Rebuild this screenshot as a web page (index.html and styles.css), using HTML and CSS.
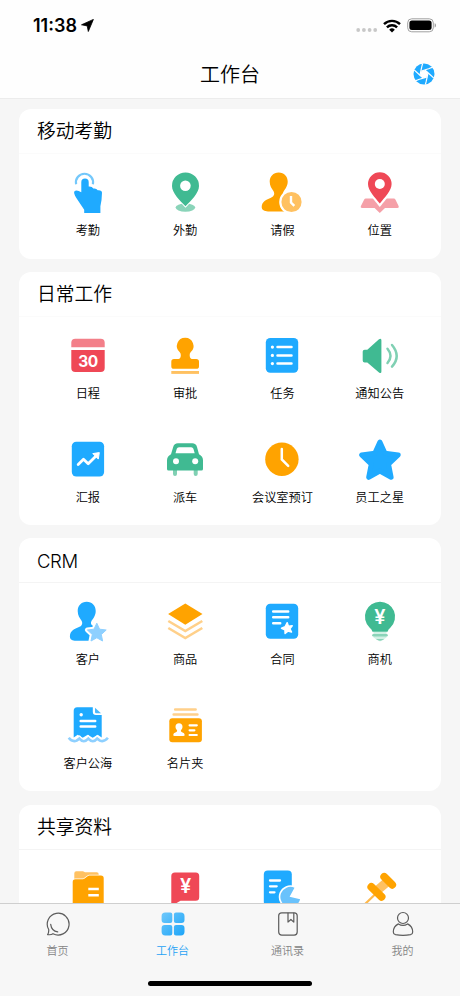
FILE: index.html
```
<!DOCTYPE html>
<html lang="zh-CN">
<head>
    <meta charset="UTF-8">
    <meta name="viewport" content="width=device-width, initial-scale=1.0">
    <title>工作台</title>
    <link rel="stylesheet" href="styles.css">
</head>
<body>
<div class="app">

    <header class="top">
        <div class="status-bar">
            <span class="time">11:38</span>
            <svg class="location" width="13" height="13" viewBox="0 0 13 13"><path d="M12.4.4 7.3 12.5 6.2 6.9.5 5.8z" fill="#000" stroke="#000" stroke-width=".8" stroke-linejoin="round"/></svg>
            <svg class="signal" width="22" height="4" viewBox="0 0 22 4" fill="#c8c8c8"><circle cx="2.2" cy="2" r="1.9"/><circle cx="7.9" cy="2" r="1.9"/><circle cx="13.6" cy="2" r="1.9"/><circle cx="19.2" cy="2" r="1.9"/></svg>
            <svg class="wifi" width="18" height="14" viewBox="0 0 18 14" fill="none" stroke="#000" stroke-width="2.4">
                <path d="M1 5.2a11.4 11.4 0 0 1 16 0"/>
                <path d="M3.9 8.3a7.3 7.3 0 0 1 10.2 0"/>
                <path d="M9 13.4 6.2 10.7a4 4 0 0 1 5.6 0z" fill="#000" stroke="none"/>
            </svg>
            <svg class="battery" width="30" height="15" viewBox="0 0 30 15"><rect x=".7" y=".8" width="25.6" height="13" rx="4" fill="none" stroke="#a0a0a0"/><rect x="2.4" y="2.5" width="22.2" height="9.6" rx="2.5"/><path d="M27.6 5.2c1.9.6 1.9 3.7 0 4.3z" fill="#a0a0a0"/></svg>
        </div>
        <div class="title-bar">
            <h1>工作台</h1>
            <svg class="scan" width="22" height="22" viewBox="0 0 22 22">
                <circle cx="11" cy="11" r="10.5" fill="#1faaff"/>
                <path d="M11 6.9 14.7 9v4.1L11 15.2l-3.7-2.1V9z" fill="#fff"/>
                <g stroke="#fff" stroke-width="1.2" transform="rotate(12 11 11)">
                    <path d="M7.3 9 15 4.5 18 2.5"/><path d="M11 6.9 18.5 11.2 21.5 13"/><path d="M14.7 9v8.5L14.5 21"/>
                    <path d="M14.7 13.1 7 17.5 4 19.5"/><path d="M11 15.2 3.5 10.8.5 9"/><path d="M7.3 13.1V4.500L7.500 1"/>
                </g>
            </svg>
        </div>
    </header>

    <main class="content">
        <section class="card faint">
            <h2>移动考勤</h2>
            <div class="grid">
                <div class="item">
                    <svg class="icon" viewBox="0 0 48 48">
                        <path d="M12.1 16.2a8.6 8.6 0 1 1 16.8 0" fill="none" stroke="#74c8fb" stroke-width="2.2"/>
                        <path d="M17.3 14.2a3.7 3.7 0 0 1 7.4 0v4.4q3.6-.2 4.6 2 3-.6 4.4 1.6 4.3-.4 4.3 2.6-.1 7-1.600 13.400V45H20.200v-3.300L12 29.400Q9.500 25 10.300 23.400q2.200-2 7 .8z" fill="#1faaff"/>
                    </svg>
                    <span>考勤</span>
                </div>
                <div class="item">
                    <svg class="icon" viewBox="0 0 48 48">
                        <ellipse cx="24.4" cy="39.6" rx="9.8" ry="4.1" fill="#8ad4b9"/>
                        <path d="M24.5 38.2C19 32.4 11 25 11 17.9a13.5 13.5 0 0 1 27 0c0 7.100-8 14.500-13.500 20.300z" fill="#40ba92" stroke="#fff" stroke-width="2" paint-order="stroke"/>
                        <circle cx="24.400" cy="17.800" r="5.300" fill="#fff"/>
                    </svg>
                    <span>外勤</span>
                </div>
                <div class="item">
                    <svg class="icon" viewBox="0 0 48 48">
                        <path d="M20.700 4.400c5.500 0 9 4 9 9.200 0 4.600-2.200 7-4 9.600-1.500 2.500-.8 4.800 2 5.800l3 14.400H10c-3.500 0-6.300-1.300-6.300-4.300 0-5.500 4.800-7.400 9.300-9.300 3.300-1.400 4-4.200 2.400-6.700-1.700-2.500-3.700-5-3.700-9.500 0-5.200 3.600-9.200 9-9.200z" fill="#ffa300"/>
                        <circle cx="33.5" cy="34" r="11.200" fill="#ffc161" stroke="#fff" stroke-width="2.200"/>
                        <path d="M33 28v6.600l3.300 3.300" fill="none" stroke="#fff" stroke-width="2.400"/>
                    </svg>
                    <span>请假</span>
                </div>
                <div class="item">
                    <svg class="icon" viewBox="0 0 48 48">
                        <path d="M9.700 30.500h28.200q1 0 1.500 1l3.300 6.700q.6 1.800-1.200 1.800H29l-5.200 5-5.200-5H6q-1.800 0-1.200-1.800L8.200 31.500q.5-1 1.500-1z" fill="#f5a0a8"/>
                        <path d="M23.800 35.500C19 29.500 12 22.500 12 16a11.800 11.800 0 0 1 23.600 0c0 6.500-7 13.500-11.800 19.500z" fill="#ef4856" stroke="#fff" stroke-width="4.500" paint-order="stroke"/>
                        <circle cx="23.800" cy="16" r="5" fill="#fff"/>
                    </svg>
                    <span>位置</span>
                </div>
            </div>
        </section>

        <section class="card faint">
            <h2>日常工作</h2>
            <div class="grid">
                <div class="item">
                    <svg class="icon" viewBox="0 0 48 48">
                        <path d="M7.300 16.200v-4.400q0-4 4-4h25.400q4 0 4 4v4.400z" fill="#f37f89"/>
                        <path d="M7.300 18.900h33.400v18.200q0 4-4 4H11.300q-4 0-4-4z" fill="#ef4856"/>
                        <text class="day" x="24" y="35.600">30</text>
                    </svg>
                    <span>日程</span>
                </div>
                <div class="item">
                    <svg class="icon" viewBox="0 0 48 48">
                        <path d="M24.300 6.700a8.300 8.300 0 0 1 5.300 14.600q-1.200 1.200-.9 3.500.2 3 2.300 3.200h4.200q2.800 0 2.800 2.800v4.400q0 2.600-2.800 2.600H13q-2.700 0-2.700-2.600v-4.400q0-2.800 2.700-2.800h4.400q2.200-.2 2.400-3.200.2-2.300-1-3.500A8.300 8.300 0 0 1 24.300 6.700z" fill="#ffa300"/>
                        <path d="M10.300 40h27.700v2.900H10.300z" fill="#ffc161"/>
                    </svg>
                    <span>审批</span>
                </div>
                <div class="item">
                    <svg class="icon" viewBox="0 0 48 48">
                        <rect x="7.800" y="7" width="32.400" height="34.700" rx="4.500" fill="#1faaff"/>
                        <g stroke="#fff" stroke-width="2.500" stroke-linecap="round"><path d="M19.500 16.100h14M19.500 24.400h14M19.500 32.600h14"/></g>
                        <g fill="#fff"><circle cx="14.400" cy="16.100" r="1.600"/><circle cx="14.400" cy="24.400" r="1.600"/><circle cx="14.400" cy="32.600" r="1.600"/></g>
                    </svg>
                    <span>任务</span>
                </div>
                <div class="item">
                    <svg class="icon" viewBox="0 0 48 48">
                        <path d="M6.700 20.600q0-1.900 2-1.900h2.600L23 8.300q2.400-1.600 2.400 1v31.300q0 2.400-2.400 1L11.300 31.400H8.700q-2 0-2-1.900z" fill="#40ba92"/>
                        <g fill="none" stroke="#80d0b3" stroke-width="2.500" stroke-linecap="round"><path d="M31.500 17.800q6 7.200 0 14.200"/><path d="M36 14q9.400 11.200 0 21.600"/></g>
                    </svg>
                    <span>通知公告</span>
                </div>
                <div class="item">
                    <svg class="icon" viewBox="0 0 48 48">
                        <rect x="7.800" y="6.800" width="32.300" height="34.700" rx="4.500" fill="#1faaff"/>
                        <path d="m14.200 29.500 5.300-5.200 4.700 4.400 8.600-8.400" fill="none" stroke="#fff" stroke-width="2.800" stroke-linejoin="round" stroke-linecap="round"/>
                        <path d="m28.800 18.600 6.500-1-1 6.500z" fill="#fff" stroke="#fff" stroke-linejoin="round"/>
                    </svg>
                    <span>汇报</span>
                </div>
                <div class="item">
                    <svg class="icon" viewBox="0 0 48 48">
                        <path d="M14 34v5M34.700 34v5" stroke="#80d0b3" stroke-width="4" stroke-linecap="round"/>
                        <path d="M17 8.300h14.200q3.800 0 4.800 3.700l2 7.300q4 2 4 6V34q0 1.600-1.600 1.600H7.600Q6 35.600 6 34v-8.700q0-4 4-6l2.200-7.300q1-3.700 4.800-3.700z" fill="#40ba92"/>
                        <path d="M18 12.200h12.200q1.700 0 2.200 1.600l1.300 4.500H14.500l1.300-4.500q.5-1.600 2.200-1.600z" fill="#fff"/>
                        <circle cx="15" cy="26.200" r="3" fill="#fff"/><circle cx="34.200" cy="26.200" r="3" fill="#fff"/>
                    </svg>
                    <span>派车</span>
                </div>
                <div class="item">
                    <svg class="icon" viewBox="0 0 48 48">
                        <circle cx="23.900" cy="24.200" r="16.700" fill="#ffa300"/>
                        <path d="M23.800 14v10.500l6.400 6.400" fill="none" stroke="#fff" stroke-width="2.500" stroke-linecap="round"/>
                    </svg>
                    <span>会议室预订</span>
                </div>
                <div class="item">
                    <svg class="icon" viewBox="0 0 48 48">
                        <path d="m23.900 7 5.100 11.200 13.200 1.700-9.700 9.200 2.600 13.200-11.200-6.300-11.200 6.300 2.600-13.200-9.700-9.200 13.200-1.700z" fill="#1faaff" stroke="#1faaff" stroke-width="5" stroke-linejoin="round"/>
                    </svg>
                    <span>员工之星</span>
                </div>
            </div>
        </section>

        <section class="card">
            <h2 class="latin">CRM</h2>
            <div class="grid">
                <div class="item">
                    <svg class="icon" viewBox="0 0 48 48">
                        <path d="M22.700 4.700c5.500 0 9 4 9 9.200 0 4.600-2.200 7-4 9.600-1.500 2.500-.8 4.800 2 5.800L25 43.700H12c-3.500 0-6.100-1.300-6.100-4.300 0-5.500 4.600-7.400 9.100-9.300 3.300-1.400 4-4.200 2.400-6.700-1.700-2.500-3.700-5-3.700-9.500 0-5.200 3.600-9.200 9-9.200z" fill="#1faaff"/>
                        <path class="star-cut" d="m32.800 26.200 2.800 6 6.600.8-4.900 4.500 1.300 6.500-5.800-3.200-5.800 3.200 1.300-6.500-4.900-4.500 6.600-.8z"/>
                        <path d="m32.800 26.200 2.800 6 6.600.8-4.900 4.500 1.300 6.500-5.800-3.200-5.800 3.200 1.300-6.500-4.900-4.500 6.600-.8z" fill="#8ed0ff" stroke="#8ed0ff" stroke-linejoin="round"/>
                    </svg>
                    <span>客户</span>
                </div>
                <div class="item">
                    <svg class="icon" viewBox="0 0 48 48">
                        <g fill="none" stroke="#ffd08a" stroke-width="2.600"><path d="m7.300 24 17 10 17-10"/><path d="m7.300 31 17 10 17-10"/></g>
                        <path d="m24.300 6.500 17.200 10.600-17.200 10.700L7.100 17.100z" fill="#ffa300"/>
                    </svg>
                    <span>商品</span>
                </div>
                <div class="item">
                    <svg class="icon" viewBox="0 0 48 48">
                        <rect x="7.800" y="6.800" width="32.400" height="35" rx="4.500" fill="#1faaff"/>
                        <path d="M15.200 14.400h15M15.200 20.200h15M15.200 26.200h7" stroke="#fff" stroke-width="2.500" stroke-linecap="round"/>
                        <path d="m29.200 25.700 1.200 3.500 3.800-.5-2.300 3 1.600 3.400-3.600-1-2.800 2.300-.2-3.700-3.400-1.500 3.600-1.400z" fill="#fff" stroke="#fff" stroke-width="1.500" stroke-linejoin="round"/>
                    </svg>
                    <span>合同</span>
                </div>
                <div class="item">
                    <svg class="icon" viewBox="0 0 48 48">
                        <path d="M24 4.700a15 15 0 0 1 10.500 25.800q-2.400 1.800-3 4.300h-15q-.6-2.500-3-4.300A15 15 0 0 1 24 4.700z" fill="#40ba92"/>
                        <path d="M17.500 34.900h13v5.500L24 44.500l-6.500-4.100z" fill="#d2f0e5"/>
                        <path d="M17.500 38.300h13" stroke="#8ad4b9" stroke-width="2.600" stroke-linecap="round"/>
                        <path d="M19.800 42h8.600q-4.300 3.600-8.600 0z" fill="#8ad4b9"/>
                        <text class="yen" x="24" y="27.400">¥</text>
                    </svg>
                    <span>商机</span>
                </div>
                <div class="item">
                    <svg class="icon" viewBox="0 0 48 48">
                        <path d="M13.200 6.300h15.600v4.500q0 3.200 3.200 3.200h5.700v22.500l-4-2.700-5 2.900-5-2.900-5 2.900-5-2.900-4 2.700V9.800q0-3.500 3.500-3.500z" fill="#1faaff"/>
                        <path d="m31 6.700 6 5.500h-4.800q-1.200 0-1.200-1.200z" fill="#4ab9fc"/>
                        <circle cx="17.200" cy="13.800" r="1.700" fill="#fff"/>
                        <path d="M16.700 19.900h14.500M16.700 25.500h14.500" stroke="#fff" stroke-width="2.500" stroke-linecap="round"/>
                        <path d="M4.700 36.800q3.500 4.600 8 2.800l2.700-2q4.300 5.200 8.900 0 4.600 5.200 8.900 0l2.700 2q4.300 1.800 8-2.800" fill="none" stroke="#fff" stroke-width="5"/>
                        <path d="M4.700 36.800q3.500 4.600 8 2.800l2.700-2q4.300 5.200 8.900 0 4.600 5.200 8.900 0l2.700 2q4.300 1.800 8-2.800" fill="none" stroke="#8ed0ff" stroke-width="2.600"/>
                    </svg>
                    <span>客户公海</span>
                </div>
                <div class="item">
                    <svg class="icon" viewBox="0 0 48 48">
                        <path d="M14.200 8.500h20.400M12.700 13.500h23.700" stroke="#ffd08a" stroke-width="2.600" stroke-linecap="round"/>
                        <rect x="8.300" y="17.200" width="32.600" height="24.100" rx="3" fill="#ffa300"/>
                        <path d="M18 22.300c2.200 0 3.500 1.500 3.500 3.500 0 1.600-.7 2.700-1.600 3.500q-.3 1.500 1.200 2 2.600.7 2.600 2.800 0 1-1.500 1h-8.500q-1.500 0-1.500-1 0-2.100 2.700-2.800 1.500-.5 1.200-2c-.9-.8-1.600-1.900-1.600-3.500 0-2 1.300-3.500 3.500-3.500z" fill="#fff"/>
                        <path d="M28.600 24.300h7.200M28.600 29.300h4.800M28.600 34h7.200" stroke="#fff" stroke-width="2.200" stroke-linecap="round"/>
                    </svg>
                    <span>名片夹</span>
                </div>
            </div>
        </section>

        <section class="card">
            <h2>共享资料</h2>
            <div class="grid">
                <div class="item">
                    <svg class="icon" viewBox="0 0 48 48">
                        <path d="M10.300 9.200q0-2 2-2H19l2 1h11.700q2 0 2 2V18H10.300z" fill="#ffc161"/>
                        <path d="M8.700 18q0-2.700 2.600-2.700h7.500q1 0 1.800-.8l3-2.200q.8-.7 1.800-.7h11.500q2.800 0 2.800 2.800v26q0 2.500-2.500 2.500h-26q-2.500 0-2.500-2.500z" fill="#ffa300" stroke="#fff" stroke-width="1.600" paint-order="stroke"/>
                        <path d="M24.300 25h10.500M24.300 31.200h10.500" stroke="#fff" stroke-width="2.400"/>
                    </svg>
                </div>
                <div class="item">
                    <svg class="icon" viewBox="0 0 48 48">
                        <path d="M14 8.500h20.700q3.500 0 3.500 3.500v21.300q0 3.500-3.500 3.500H19.500L10.300 42V12q0-3.500 3.700-3.500z" fill="#ef4856"/>
                        <text class="yen" x="24.600" y="29.200">¥</text>
                    </svg>
                </div>
                <div class="item">
                    <svg class="icon" viewBox="0 0 48 48">
                        <rect x="5.800" y="6.500" width="28" height="35" rx="4" fill="#1faaff"/>
                        <path d="M12 16.500h10M12 22.300h6.700M12 28.300h4.500" stroke="#fff" stroke-width="2.300" stroke-linecap="round"/>
                        <path d="M36.500 23.800 31.600 32.700l10.500 2.500A10 10 0 1 1 36.500 23.800z" fill="#69c2fc" stroke="#fff" stroke-width="3.200" paint-order="stroke"/>
                    </svg>
                </div>
                <div class="item">
                    <svg class="icon" viewBox="0 0 48 48">
                        <path d="M20 29.500 7 42" stroke="#ffb94b" stroke-width="2.200"/>
                        <path d="m19.800 27.600 11.500-9.800" stroke="#ffc161" stroke-width="9"/>
                        <path d="m28.200 12.800 8 8M15.300 22.900l10.300 10" stroke="#ffa300" stroke-width="7.800" stroke-linecap="round"/>
                    </svg>
                </div>
            </div>
        </section>
    </main>

    <nav class="tabs">
        <div class="tab">
            <svg width="26" height="26" viewBox="0 0 26 26" fill="none" stroke="#5c5c5c" stroke-width="1.200" stroke-linecap="round" stroke-linejoin="round">
                <path d="M3.700 18.500A10.900 10.900 0 1 1 8 22.700q-2 1.400-5.400.9 1.400-1.900 1.100-5.100z"/>
                <path d="M5.700 13.400q.8 6.600 7 7.500"/>
            </svg>
            <span>首页</span>
        </div>
        <div class="tab active">
            <svg width="26" height="26" viewBox="0 0 26 26">
                <defs><linearGradient id="blue" x1="0" y1="0" x2="1" y2="1"><stop offset="0" stop-color="#6fc8fb"/><stop offset="1" stop-color="#1da5f8"/></linearGradient></defs>
                <path fill="url(#blue)" d="M5.200 1.600h5.100q2 0 2 2v6.300q0 2-2 2H4.600q-3 0-3-3V5.200q0-3.600 3.600-3.600zM15.900 1.600h5q3.600 0 3.600 3.600v3.700q0 3-3 3h-5.600q-2 0-2-2V3.600q0-2 2-2zM4.600 13.900h5.700q2 0 2 2v6.500q0 2-2 2H5.200q-3.600 0-3.600-3.600v-3.900q0-3 3-3zM15.900 13.900h5.600q3 0 3 3v3.900q0 3.600-3.600 3.600h-5q-2 0-2-2v-6.500q0-2 2-2z"/>
            </svg>
            <span>工作台</span>
        </div>
        <div class="tab">
            <svg width="26" height="26" viewBox="0 0 26 26" fill="none" stroke="#5c5c5c" stroke-width="1.200" stroke-linejoin="round">
                <rect x="3.700" y="1.800" width="18.500" height="22.300" rx="3"/>
                <path d="M13 1.800v9.300l2.900-2.600 2.900 2.600V1.800"/>
            </svg>
            <span>通讯录</span>
        </div>
        <div class="tab">
            <svg width="26" height="26" viewBox="0 0 26 26" fill="none" stroke="#5c5c5c" stroke-width="1.200" stroke-linejoin="round">
                <circle cx="13" cy="7" r="5.500"/>
                <path d="M8.400 12.900Q3.300 15.500 3.300 21q0 2.200 2.200 2.700 7.500 1.200 15 0 2.200-.5 2.200-2.700 0-5.500-5.100-8.100-4.600 2.900-9.200 0z"/>
            </svg>
            <span>我的</span>
        </div>
    </nav>
    <div class="home-area"><div class="home-indicator"></div></div>

</div>
</body>
</html>
```
FILE: styles.css
```
* {
    box-sizing: border-box;
}

body {
    margin: 0;
    background: #f6f6f6;
    color: #000;
    font-family: "Noto Sans CJK SC", sans-serif;
    font-weight: 350;
}

.app {
    display: flex;
    flex-direction: column;
    width: 460px;
    height: 996px;
    overflow: hidden;
}

/* Status bar + title */
.top {
    height: 99px;
    background: #fefefe;
    border-bottom: 1px solid #ececec;
}

.status-bar {
    display: flex;
    align-items: center;
    height: 51px;
    padding: 0 23px 0 33px;
}

.time {
    font-family: Inter, sans-serif;
    font-size: 18px;
    font-weight: 600;
    line-height: 20px;
}

.location {
    margin-left: 4px;
}

.signal {
    margin: 9px 5px 0 auto;
}

.wifi {
    margin-right: 6px;
}

.title-bar {
    display: grid;
    grid-template-columns: 1fr auto 1fr;
    align-items: center;
    height: 45px;
    padding: 0 25px;
}

.title-bar h1 {
    grid-column: 2;
    margin: 0;
    font-size: 20px;
    font-weight: 350;
    line-height: 28px;
}

.scan {
    justify-self: end;
}

/* Cards */
.content {
    flex: 1;
    min-height: 0;
    overflow: hidden;
    padding: 10.25px 19px 0 18.5px;
}

.card {
    margin-bottom: 13.25px;
    background: #fff;
    border-radius: 12px;
}

.card h2 {
    height: 45px;
    margin: 0 0 1px;
    padding-left: 18.5px;
    border-bottom: 1px solid #f4f4f4;
    font-family: Inter, "Noto Sans CJK SC", sans-serif;
    font-size: 18.8px;
    font-weight: 350;
    line-height: 46px;
}

.card.faint h2 {
    border-bottom-color: #fbfbfb;
}

.card h2.latin {
    font-size: 18.5px;
    letter-spacing: -0.4px;
}

.grid {
    display: grid;
    grid-template-columns: repeat(4, 97.3px);
    grid-auto-rows: 103.5px;
    padding-left: 20.7px;
}

.item {
    display: flex;
    flex-direction: column;
    align-items: center;
    padding-top: 13px;
}

.icon {
    flex: none;
    width: 48px;
    height: 48px;
}

.item span {
    margin-top: 5px;
    font-size: 12.2px;
    line-height: 18px;
    white-space: nowrap;
}

.day {
    fill: #fff;
    font: 700 15.5px Inter, sans-serif;
    letter-spacing: -0.5px;
    text-anchor: middle;
}

.yen {
    fill: #fff;
    font: 600 20px Inter, sans-serif;
    text-anchor: middle;
}

.star-cut {
    fill: #fff;
    stroke: #fff;
    stroke-width: 5;
    stroke-linejoin: round;
}

/* Bottom tabs */
.tabs {
    display: flex;
    height: 62px;
    padding-top: 7px;
    background: #f7f7f7;
    border-top: 1px solid #cfcfcf;
}

.tab {
    flex: 1;
    display: flex;
    flex-direction: column;
    align-items: center;
    color: #858585;
}

.tab span {
    margin-top: 5px;
    font-size: 11px;
    line-height: 16px;
}

.tab.active {
    color: #1fa2f5;
}

.home-area {
    display: flex;
    justify-content: center;
    height: 31px;
    padding-top: 16px;
    background: #f7f7f7;
}

.home-indicator {
    width: 164px;
    height: 5px;
    border-radius: 3px;
    background: #000;
}
```
